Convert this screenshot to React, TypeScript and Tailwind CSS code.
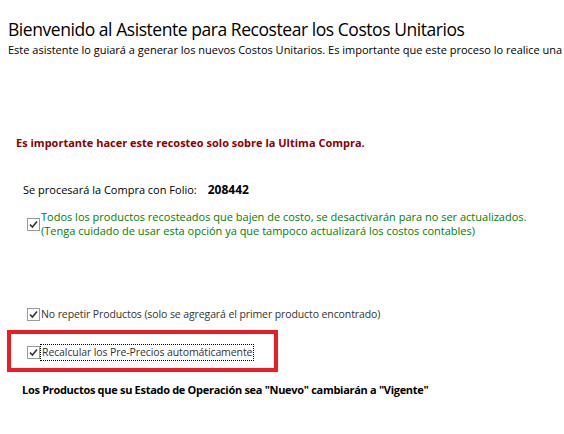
import React from "react";

function CheckBox() {
  return (
    <span className="flex h-[13px] w-[13px] shrink-0 items-center justify-center border border-[#9a9a9a] bg-white">
      <svg width="9" height="9" viewBox="0 0 9 9" fill="none">
        <path d="M1 4.5 L3.4 7 L8 1.6" stroke="#333333" strokeWidth="1.6" />
      </svg>
    </span>
  );
}

export default function App() {
  return (
    <div
      className="h-[434px] w-[564px] overflow-hidden bg-white text-black"
      style={{ fontFamily: '"Open Sans", "Noto Sans", sans-serif' }}
    >
      <div className="pl-[8px] pt-[17px]">
        <h1 className="whitespace-nowrap text-[17.5px] font-normal leading-[24px] tracking-[-0.45px]">
          Bienvenido al Asistente para Recostear los Costos Unitarios
        </h1>
        <p className="mt-[1px] whitespace-nowrap text-[11px] leading-[16px]">
          Este asistente lo guiará a generar los nuevos Costos Unitarios. Es importante que este proceso lo realice una vez
        </p>
      </div>

      <p className="mt-[77px] pl-[16px] text-[11px] font-bold leading-[16px] text-[#8b0000]">
        Es importante hacer este recosteo solo sobre la Ultima Compra.
      </p>

      <div className="mt-[31px] flex items-center pl-[23px] text-[11px] leading-[16px]">
        <span>Se procesará la Compra con Folio:</span>
        <span className="ml-[11px] text-[12px] font-bold">208442</span>
      </div>

      <div className="mt-[12px] flex items-start gap-[1px] pl-[27px] text-[11px] leading-[14px] text-[#008000]">
        <span className="mt-[8px]">
          <CheckBox />
        </span>
        <div className="whitespace-nowrap">
          <div>Todos los productos recosteados que bajen de costo, se desactivarán para no ser actualizados.</div>
          <div>(Tenga cuidado de usar esta opción ya que tampoco actualizará los costos contables)</div>
        </div>
      </div>

      <div className="mt-[68px] flex items-center gap-[1px] pl-[27px] text-[10.5px] leading-[16px] tracking-[-0.1px] text-[#333333]">
        <CheckBox />
        <span className="whitespace-nowrap">No repetir Productos (solo se agregará el primer producto encontrado)</span>
      </div>

      <div className="ml-[7px] mt-[8px] flex h-[42px] w-[271px] items-center border-4 border-[#ed1c24] pl-[16px] pt-[2px]">
        <div className="flex items-center text-[10.5px] leading-[15px] tracking-[-0.1px] text-[#333333]">
          <CheckBox />
          <span className="whitespace-nowrap border border-dotted border-black px-[1px]">Recalcular los Pre-Precios automáticamente</span>
        </div>
      </div>

      <p className="mt-[10px] whitespace-nowrap pl-[22px] text-[11px] font-bold leading-[16px] tracking-[-0.3px]">
        Los Productos que su Estado de Operación sea "Nuevo" cambiarán a "Vigente"
      </p>
    </div>
  );
}
